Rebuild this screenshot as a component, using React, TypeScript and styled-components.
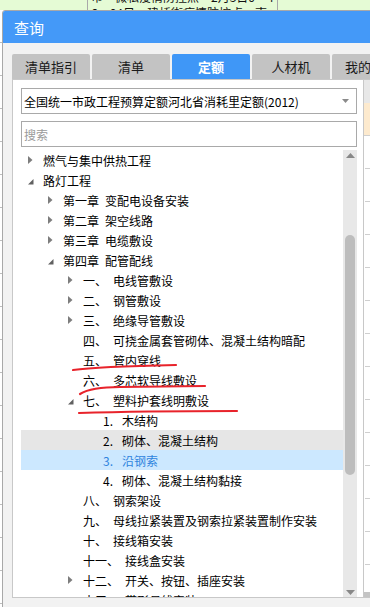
import React from "react";
import styled, { createGlobalStyle } from "styled-components";

const GlobalStyle = createGlobalStyle`
  html, body { margin: 0; padding: 0; }
  body {
    width: 370px; height: 607px; overflow: hidden; background: #fff;
    font-family: "Noto Sans CJK SC", "Noto Sans", "Liberation Sans", sans-serif;
  }
  * { box-sizing: border-box; }
`;

const Page = styled.div`
  position: relative;
  width: 370px;
  height: 607px;
  overflow: hidden;
  background: #fff;
`;

/* ---------- background application (behind the dialog) ---------- */
const BgTop = styled.div`
  display: flex;
  height: 10px;
  background: #e5fbd5;
  overflow: hidden;
`;
const BgCell = styled.div<{ $w?: number }>`
  flex: ${(p) => (p.$w ? `0 0 ${p.$w}px` : "1")};
  border-right: 1px solid #a9a9a9;
  overflow: hidden;
  &:last-child { border-right: none; }
`;
const BgText = styled.div`
  margin-top: -11px;
  padding-left: 3px;
  font-size: 12px;
  line-height: 16px;
  color: #111;
  white-space: nowrap;
`;
const BgRows = styled.div`
  display: flex;
  flex-direction: column;
`;
const BgRow = styled.div`
  height: 33px;
  border-bottom: 1px solid #bdbdbd;
`;

/* ---------- dialog ---------- */
const Dialog = styled.div`
  position: absolute;
  left: 2px;
  top: 10px;
  width: 420px;
  height: 620px;
  border: 1px solid #a8a8a8;
  border-top-left-radius: 3px;
  background: #f2f2f2;
  display: flex;
  flex-direction: column;
  overflow: hidden;
`;
const TitleBar = styled.div`
  height: 32px;
  flex: 0 0 32px;
  background: #4499f8;
  color: #fff;
  font-size: 15px;
  display: flex;
  align-items: center;
  padding-left: 11px;
`;
const Body = styled.div`
  padding: 11px 0 0 9px;
  display: flex;
  flex-direction: column;
`;
const TabBar = styled.div`
  display: flex;
  gap: 2px;
  height: 25px;
`;
const Tab = styled.div<{ $active?: boolean }>`
  flex: 0 0 78px;
  height: 25px;
  border-radius: 2px 2px 0 0;
  background: ${(p) => (p.$active ? "#3f97f7" : "#c3c3c3")};
  color: ${(p) => (p.$active ? "#fff" : "#1a1a1a")};
  font-weight: ${(p) => (p.$active ? 700 : 400)};
  font-size: 13px;
  display: flex;
  align-items: center;
  justify-content: center;
  white-space: nowrap;
  overflow: hidden;
`;
const ContentRow = styled.div`
  display: flex;
  height: 519px;
`;
const TreePanel = styled.div`
  flex: 0 0 352px;
  height: 519px;
  background: #fff;
  border: 1px solid #c8c8c8;
  padding: 8px 6px 0 8px;
  display: flex;
  flex-direction: column;
`;
const Select = styled.div`
  height: 26px;
  flex: 0 0 26px;
  border: 1px solid #a9a9a9;
  background: #fff;
  display: flex;
  align-items: center;
  justify-content: space-between;
  padding: 0 7px 0 2px;
  font-size: 12px;
  color: #000;
  white-space: nowrap;
`;
const SearchInput = styled.input`
  margin-top: 7px;
  height: 26px;
  flex: 0 0 26px;
  width: 100%;
  border: 1px solid #a9a9a9;
  padding: 0 2px;
  font-size: 12px;
  font-family: inherit;
  outline: none;
  &::placeholder { color: #9a9a9a; }
`;
const TreeArea = styled.div`
  margin-top: 3px;
  flex: 1;
  display: flex;
  overflow: hidden;
`;
const TreeList = styled.div`
  flex: 1;
  display: flex;
  flex-direction: column;
  overflow: hidden;
`;
const Row = styled.div<{ $level: number; $state?: "hover" | "selected" }>`
  flex: 0 0 20px;
  height: 20px;
  display: flex;
  align-items: center;
  padding-left: ${(p) => 7 + p.$level * 20}px;
  font-size: 12px;
  white-space: nowrap;
  background: ${(p) =>
    p.$state === "hover" ? "#e6e6e6" : p.$state === "selected" ? "#cce8ff" : "transparent"};
  color: ${(p) => (p.$state === "selected" ? "#2f84de" : "#000")};
`;
const ArrowSlot = styled.span`
  flex: 0 0 15px;
  width: 15px;
  height: 20px;
  display: flex;
  align-items: center;
`;
const Num = styled.span<{ $w?: number }>`
  display: inline-block;
  margin-right: 6px;
  ${(p) => (p.$w ? `width: ${p.$w}px;` : "")}
`;
const Scrollbar = styled.div`
  flex: 0 0 14px;
  width: 14px;
  background: #e8e8e8;
  display: flex;
  flex-direction: column;
  align-items: center;
`;
const ScrollBtn = styled.div`
  height: 10px;
  flex: 0 0 10px;
  display: flex;
  align-items: center;
  justify-content: center;
`;
const ThumbZone = styled.div`
  flex: 1;
  width: 100%;
  display: flex;
  flex-direction: column;
  align-items: center;
  padding-top: 75px;
`;
const Thumb = styled.div`
  width: 10px;
  height: 240px;
  border-radius: 5px;
  background: #bdbdbd;
`;

const SidePanel = styled.div`
  flex: 1;
  height: 519px;
  background: #fff;
  border-top: 1px solid #c8c8c8;
  border-bottom: 1px solid #c8c8c8;
  display: flex;
  flex-direction: column;
`;
const SideHeader = styled.div`
  height: 23px;
  flex: 0 0 23px;
  background: #e8e8e8;
`;
const SideRow = styled.div<{ $selected?: boolean }>`
  height: 33px;
  flex: 0 0 33px;
  margin-left: ${(p) => (p.$selected ? 0 : 1)}px;
  background: ${(p) => (p.$selected ? "#fdeace" : "#fff")};
  border-bottom: 1px solid #cfcfcf;
`;
const SideScroll = styled.div`
  margin-top: auto;
  height: 5px;
  flex: 0 0 5px;
  background: #c4c4c4;
`;

const Marks = styled.svg`
  position: absolute;
  left: 0;
  top: 0;
  pointer-events: none;
`;

type Node = {
  level: number;
  arrow: "expand" | "collapse" | "none";
  num?: string;
  numW?: number;
  title: string;
  state?: "hover" | "selected";
};

const nodes: Node[] = [
  { level: 0, arrow: "expand", title: "燃气与集中供热工程" },
  { level: 0, arrow: "collapse", title: "路灯工程" },
  { level: 1, arrow: "expand", num: "第一章", title: "变配电设备安装" },
  { level: 1, arrow: "expand", num: "第二章", title: "架空线路" },
  { level: 1, arrow: "expand", num: "第三章", title: "电缆敷设" },
  { level: 1, arrow: "collapse", num: "第四章", title: "配管配线" },
  { level: 2, arrow: "expand", num: "一、", title: "电线管敷设" },
  { level: 2, arrow: "expand", num: "二、", title: "钢管敷设" },
  { level: 2, arrow: "expand", num: "三、", title: "绝缘导管敷设" },
  { level: 2, arrow: "none", num: "四、", title: "可挠金属套管砌体、混凝土结构暗配" },
  { level: 2, arrow: "none", num: "五、", title: "管内穿线" },
  { level: 2, arrow: "none", num: "六、", title: "多芯软导线敷设" },
  { level: 2, arrow: "collapse", num: "七、", title: "塑料护套线明敷设" },
  { level: 3, arrow: "none", num: "1.", numW: 13, title: "木结构" },
  { level: 3, arrow: "none", num: "2.", numW: 13, title: "砌体、混凝土结构", state: "hover" },
  { level: 3, arrow: "none", num: "3.", numW: 13, title: "沿钢索", state: "selected" },
  { level: 3, arrow: "none", num: "4.", numW: 13, title: "砌体、混凝土结构黏接" },
  { level: 2, arrow: "none", num: "八、", title: "钢索架设" },
  { level: 2, arrow: "none", num: "九、", title: "母线拉紧装置及钢索拉紧装置制作安装" },
  { level: 2, arrow: "none", num: "十、", title: "接线箱安装" },
  { level: 2, arrow: "none", num: "十一、", title: "接线盒安装" },
  { level: 2, arrow: "expand", num: "十二、", title: "开关、按钮、插座安装" },
  { level: 2, arrow: "none", num: "十三、", title: "带形母线安装" },
];

const ExpandIcon = () => (
  <svg width="5" height="8" viewBox="0 0 5 8">
    <polygon points="0,0 4.5,4 0,8" fill="#7d7d7d" />
  </svg>
);
const CollapseIcon = () => (
  <svg width="6" height="9" viewBox="0 0 6 9">
    <polygon points="5.5,3 5.5,8.5 0,8.5" fill="#616161" />
  </svg>
);

export default function App() {
  return (
    <Page>
      <GlobalStyle />
      <BgTop>
        <BgCell $w={88} />
        <BgCell $w={190}>
          <BgText>
            市・微私疫情防控点・2月3日0·4
            <br />
            6・04日，建桥街疫情防控点，南
          </BgText>
        </BgCell>
        <BgCell />
      </BgTop>
      <BgRows>
        {Array.from({ length: 18 }).map((_, i) => (
          <BgRow key={i} />
        ))}
      </BgRows>

      <Dialog>
        <TitleBar>查询</TitleBar>
        <Body>
          <TabBar>
            <Tab>清单指引</Tab>
            <Tab>清单</Tab>
            <Tab $active>定额</Tab>
            <Tab>人材机</Tab>
            <Tab>我的收藏</Tab>
          </TabBar>
          <ContentRow>
            <TreePanel>
              <Select>
                <span>全国统一市政工程预算定额河北省消耗里定额(2012)</span>
                <svg width="7" height="4" viewBox="0 0 7 4">
                  <polygon points="0,0 7,0 3.5,4" fill="#8a8a8a" />
                </svg>
              </Select>
              <SearchInput placeholder="搜索" readOnly />
              <TreeArea>
                <TreeList>
                  {nodes.map((n, i) => (
                    <Row key={i} $level={n.level} $state={n.state}>
                      <ArrowSlot>
                        {n.arrow === "expand" && <ExpandIcon />}
                        {n.arrow === "collapse" && <CollapseIcon />}
                      </ArrowSlot>
                      {n.num && <Num $w={n.numW}>{n.num}</Num>}
                      <span>{n.title}</span>
                    </Row>
                  ))}
                </TreeList>
                <Scrollbar>
                  <ScrollBtn>
                    <svg width="9" height="5" viewBox="0 0 9 5">
                      <polygon points="0,5 9,5 4.5,0" fill="#888" />
                    </svg>
                  </ScrollBtn>
                  <ThumbZone>
                    <Thumb />
                  </ThumbZone>
                  <ScrollBtn>
                    <svg width="9" height="5" viewBox="0 0 9 5">
                      <polygon points="0,0 9,0 4.5,5" fill="#888" />
                    </svg>
                  </ScrollBtn>
                </Scrollbar>
              </TreeArea>
            </TreePanel>
            <SidePanel>
              <SideHeader />
              <SideRow $selected />
              {Array.from({ length: 13 }).map((_, i) => (
                <SideRow key={i} />
              ))}
              <SideScroll />
            </SidePanel>
          </ContentRow>
        </Body>
      </Dialog>

      <Marks width="370" height="607" viewBox="0 0 370 607">
        <g fill="none" stroke="#e8232b" strokeWidth="2.2" strokeLinecap="round">
          <path d="M73 370 C 95 367, 130 366, 176 365" />
          <path d="M80 394 C 88 389, 100 387, 120 387 L 205 386" />
          <path d="M79 413 C 110 412, 180 411, 237 411" />
        </g>
      </Marks>
    </Page>
  );
}
